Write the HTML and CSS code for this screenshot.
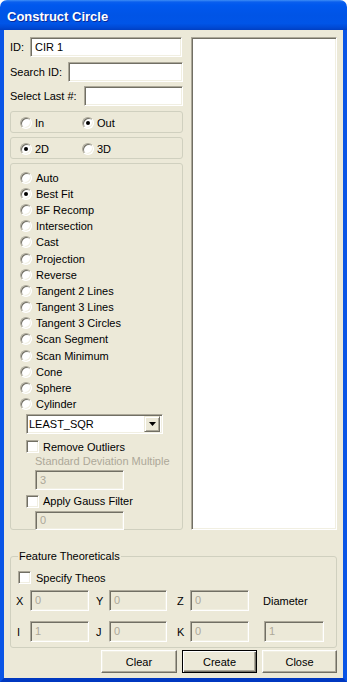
FILE: index.html
```html
<!DOCTYPE html>
<html>
<head>
<meta charset="utf-8">
<title>Construct Circle</title>
<link rel="stylesheet" href="styles.css">
</head>
<body>
<div class="window">
  <div class="titlebar"><span class="title">Construct Circle</span></div>
  <div class="client">
    <div class="top">
      <div class="left">
        <div class="field"><span class="lbl lbl-id">ID:</span><div class="input input-id">CIR 1</div></div>
        <div class="field"><span class="lbl lbl-search">Search ID:</span><div class="input"></div></div>
        <div class="field"><span class="lbl lbl-last">Select Last #:</span><div class="input"></div></div>

        <div class="group pair pair-first">
          <span class="opt"><span class="radio"></span>In</span>
          <span class="opt"><span class="radio on"></span>Out</span>
        </div>
        <div class="group pair">
          <span class="opt"><span class="radio on"></span>2D</span>
          <span class="opt"><span class="radio"></span>3D</span>
        </div>

        <div class="group list">
          <div class="row"><span class="radio"></span>Auto</div>
          <div class="row"><span class="radio on"></span>Best Fit</div>
          <div class="row"><span class="radio"></span>BF Recomp</div>
          <div class="row"><span class="radio"></span>Intersection</div>
          <div class="row"><span class="radio"></span>Cast</div>
          <div class="row"><span class="radio"></span>Projection</div>
          <div class="row"><span class="radio"></span>Reverse</div>
          <div class="row"><span class="radio"></span>Tangent 2 Lines</div>
          <div class="row"><span class="radio"></span>Tangent 3 Lines</div>
          <div class="row"><span class="radio"></span>Tangent 3 Circles</div>
          <div class="row"><span class="radio"></span>Scan Segment</div>
          <div class="row"><span class="radio"></span>Scan Minimum</div>
          <div class="row"><span class="radio"></span>Cone</div>
          <div class="row"><span class="radio"></span>Sphere</div>
          <div class="row"><span class="radio"></span>Cylinder</div>

          <div class="combo">
            <span class="combo-text">LEAST_SQR</span>
            <span class="combo-btn"><svg width="7" height="4" viewBox="0 0 7 4"><polygon points="0,0 7,0 3.5,4" fill="#000"/></svg></span>
          </div>

          <div class="crow crow-outliers"><span class="check"></span>Remove Outliers</div>
          <div class="dlabel">Standard Deviation Multiple</div>
          <div class="input disabled small small-sd">3</div>
          <div class="crow crow-gauss"><span class="check"></span>Apply Gauss Filter</div>
          <div class="input disabled small small-gauss">0</div>
        </div>
      </div>
      <div class="listbox"></div>
    </div>

    <fieldset class="theos">
      <legend>Feature Theoreticals</legend>
      <div class="crow crow-theos"><span class="check"></span>Specify Theos</div>
      <div class="coords">
        <span class="clbl">X</span><div class="input disabled">0</div>
        <span class="clbl clbl-2">Y</span><div class="input disabled">0</div>
        <span class="clbl clbl-3">Z</span><div class="input disabled">0</div>
        <span class="spacer"></span><span class="clbl clbl-d">Diameter</span>
        <span class="clbl clbl-i">I</span><div class="input disabled">1</div>
        <span class="clbl clbl-2">J</span><div class="input disabled">0</div>
        <span class="clbl clbl-3">K</span><div class="input disabled">0</div>
        <span class="spacer"></span><div class="input disabled">1</div>
      </div>
    </fieldset>

    <div class="buttons">
      <div class="btn btn-clear">Clear</div>
      <div class="btn btn-default">Create</div>
      <div class="btn">Close</div>
    </div>
  </div>
</div>
</body>
</html>
```

FILE: styles.css
```css
html, body {
  margin: 0;
  padding: 0;
}

body {
  background: #ffffff;
  font-family: "Liberation Sans", Arial, sans-serif;
  font-size: 11px;
  color: #000;
}

.window {
  width: 347px;
  height: 682px;
  display: flex;
  flex-direction: column;
}

.titlebar {
  flex: none;
  height: 30px;
  box-sizing: border-box;
  border-radius: 7px 7px 0 0;
  background: linear-gradient(to bottom, #3d8df5 0px, #0a5fee 2px, #0058ee 5px, #0054e6 50%, #0055e8 78%, #0049d4 92%, #003fc2 100%);
  display: flex;
  align-items: center;
  padding: 2px 0 0 7px;
}

.title {
  color: #fff;
  font-weight: bold;
  font-size: 13px;
  text-shadow: 1px 1px 0 #0a2a9a;
}

.client {
  flex: 1;
  box-sizing: border-box;
  background: #ECE9D8;
  border-left: 4px solid #0a55e6;
  border-right: 4px solid #0a55e6;
  border-bottom: 4px solid #0038c0;
  display: flex;
  flex-direction: column;
  padding: 7px 6px 5px;
}

.top {
  display: flex;
  gap: 8px;
  height: 493px;
  flex: none;
}

.left {
  width: 173px;
  flex: none;
  display: flex;
  flex-direction: column;
}

.field {
  display: flex;
  align-items: center;
  height: 20px;
}

.field + .field {
  margin-top: 4.5px;
}

.lbl {
  flex: none;
  white-space: nowrap;
}

.lbl-id { width: 20px; }
.lbl-search { width: 58px; }
.lbl-last { width: 74px; }

.input {
  flex: 1;
  height: 20px;
  box-sizing: border-box;
  background: #fff;
  border: 1px solid;
  border-color: #ACA899 #fff #fff #ACA899;
  box-shadow: inset 1px 1px 0 #716F64, inset -1px -1px 0 #F1EFE2;
  padding: 0 4px;
  line-height: 18px;
  white-space: nowrap;
  overflow: hidden;
}

.input-id {
  margin-right: 1px;
}

.input.disabled {
  background: #ECE9D8;
  color: #ACA899;
}

.group {
  border: 1px solid #D0D0BF;
  border-radius: 3px;
  box-sizing: border-box;
}

.pair {
  height: 22px;
  margin-top: 4px;
  display: flex;
  align-items: center;
  padding: 2px 0 0 9px;
}

.pair-first {
  margin-top: 5px;
}

.opt {
  width: 62px;
  display: flex;
  align-items: center;
  gap: 3px;
}

.radio {
  flex: none;
  position: relative;
  width: 12px;
  height: 12px;
  box-sizing: border-box;
  border-radius: 50%;
  background: #fff;
  border: 1px solid;
  border-color: #ACA899 #fff #fff #ACA899;
  box-shadow: inset 1px 1px 0 #716F64, inset -1px -1px 0 #F1EFE2;
}

.radio.on::after {
  content: "";
  position: absolute;
  left: 3px;
  top: 3px;
  width: 4px;
  height: 4px;
  border-radius: 50%;
  background: #000;
}

.list {
  height: 367px;
  margin-top: 4px;
  padding: 5.5px 0 0 9px;
  display: flex;
  flex-direction: column;
}

.row {
  height: 16.2px;
  flex: none;
  display: flex;
  align-items: center;
  gap: 4px;
  white-space: nowrap;
}

.combo {
  flex: none;
  width: 137px;
  height: 20px;
  box-sizing: border-box;
  margin: 2px 0 0 6px;
  background: #fff;
  border: 1px solid;
  border-color: #ACA899 #fff #fff #ACA899;
  box-shadow: inset 1px 1px 0 #716F64, inset -1px -1px 0 #F1EFE2;
  display: flex;
  align-items: center;
  padding: 2px;
}

.combo-text {
  flex: 1;
}

.combo-btn {
  width: 16px;
  height: 16px;
  box-sizing: border-box;
  background: #ECE9D8;
  border: 1px solid;
  border-color: #ECE9D8 #716F64 #716F64 #ECE9D8;
  box-shadow: inset 1px 1px 0 #fff, inset -1px -1px 0 #ACA899;
  display: flex;
  align-items: center;
  justify-content: center;
}

.crow {
  flex: none;
  display: flex;
  align-items: center;
  gap: 4px;
  height: 13px;
  white-space: nowrap;
}

.crow-outliers {
  margin: 6px 0 0 6px;
}

.crow-gauss {
  margin: 4.5px 0 0 6px;
}

.check {
  flex: none;
  width: 13px;
  height: 13px;
  box-sizing: border-box;
  background: #fff;
  border: 1px solid;
  border-color: #ACA899 #fff #fff #ACA899;
  box-shadow: inset 1px 1px 0 #716F64, inset -1px -1px 0 #F1EFE2;
}

.dlabel {
  color: #ACA899;
  line-height: 13px;
  margin: 1.5px 0 0 15px;
  white-space: nowrap;
}

.small {
  flex: none;
  width: 89px;
  margin-left: 15px;
}

.small-sd {
  margin-top: 2.5px;
}

.small-gauss {
  margin-top: 3.5px;
  height: 19px;
  line-height: 17px;
}

.listbox {
  flex: 1;
  box-sizing: border-box;
  background: #fff;
  border: 1px solid;
  border-color: #ACA899 #fff #fff #ACA899;
  box-shadow: inset 1px 1px 0 #716F64, inset -1px -1px 0 #F1EFE2;
}

.theos {
  margin: 19.5px 0 0 0;
  padding: 0 0 5px 7px;
  border: 1px solid #D0D0BF;
  border-radius: 3px;
  min-width: 0;
}

.theos legend {
  padding: 0 1px;
  line-height: 13px;
}

.crow-theos {
  margin-top: 8.5px;
  gap: 5px;
}

.coords {
  margin: 6px 0 0 -2px;
  display: grid;
  grid-template-columns: 14px 59px 20px 58px 23px 59px 15px 60px;
  grid-auto-rows: 21px;
  row-gap: 10px;
  align-items: center;
}

.coords .input {
  height: 21px;
  line-height: 19px;
}

.clbl {
  white-space: nowrap;
}

.clbl-2 { padding-left: 7px; }
.clbl-3 { padding-left: 10px; }
.clbl-i { padding-left: 1px; }
.clbl-d { margin-left: -1px; }

.buttons {
  margin-top: 2px;
  display: flex;
  justify-content: flex-end;
  gap: 5px;
}

.btn {
  width: 75px;
  height: 23px;
  box-sizing: border-box;
  background: #ECE9D8;
  border: 1px solid;
  border-color: #fff #716F64 #716F64 #fff;
  box-shadow: inset -1px -1px 0 #ACA899, inset 1px 1px 0 #F1EFE2;
  display: flex;
  align-items: center;
  justify-content: center;
}

.btn-clear {
  width: 76px;
}

.btn-default {
  border: 1px solid #000;
  box-shadow: inset 1px 1px 0 #fff, inset -1px -1px 0 #716F64, inset -2px -2px 0 #ACA899;
}
```
